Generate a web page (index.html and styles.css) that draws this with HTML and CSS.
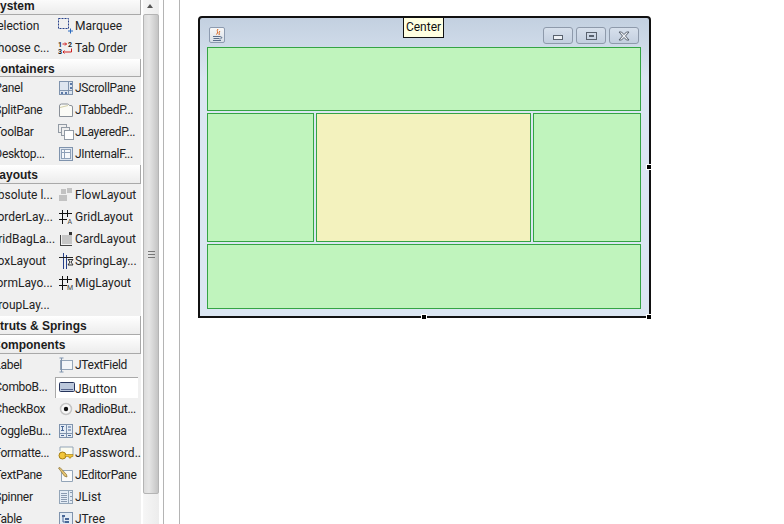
FILE: index.html
```html
<!DOCTYPE html>
<html lang="en">

<head>
    <meta charset="UTF-8">
    <title>Designer</title>
    <link rel="stylesheet" href="styles.css">
</head>

<body>
    <aside class="palette">
        <div class="palette-inner">
            <h3 class="group">System</h3>
            <div class="items">
                <div class="item">Selection</div>
                <div class="item">
                    <svg class="icon" viewBox="0 0 16 16"><rect x="0.500" y="0.500" width="10" height="10" fill="none" stroke="#26408a" stroke-dasharray="2 1"/><path d="M12.500 10.500v5M10 13h5" stroke="#2a6ac0"/></svg>
                    Marquee
                </div>
                <div class="item">Choose c...</div>
                <div class="item">
                    <svg class="icon" viewBox="0 0 16 16"><text x="0" y="6.500" class="icon-num">1</text><text x="10" y="6.500" class="icon-num">2</text><text x="0" y="13.500" class="icon-num">3</text><path d="M4.500 4h4M7 2.500L8.500 4 7 5.500M13.500 8.500v3.500H5M6.500 10.500L5 12l1.500 1.500" fill="none" stroke="#d02020"/></svg>
                    Tab Order
                </div>
            </div>
            <h3 class="group group-short">Containers</h3>
            <div class="items">
                <div class="item item-j">JPanel</div>
                <div class="item tight">
                    <svg class="icon" viewBox="0 0 16 16"><rect x="1.500" y="1.500" width="13" height="13" fill="#dde5ef" stroke="#7f93ad"/><path d="M10.500 2v12M2 10.500h12" stroke="#7f93ad"/><path d="M12 3h2v2h-2zM12 7h2v2h-2zM3 12h2v2H3zM7 12h2v2H7z" fill="#5a78a8"/></svg>
                    JScrollPane
                </div>
                <div class="item item-j">JSplitPane</div>
                <div class="item tight">
                    <svg class="icon" viewBox="0 0 16 16"><path d="M1.500 14.500V4q0-2 2-2h6q1 0 2 1.500h1.500q1.500 0 1.500 1.500v9.500z" fill="#fbfbf6" stroke="#8a9098"/><path d="M2 5.500q4-1 8-2" fill="none" stroke="#d4d0a8"/></svg>
                    JTabbedP...
                </div>
                <div class="item item-j">JToolBar</div>
                <div class="item tight">
                    <svg class="icon" viewBox="0 0 16 16"><rect x="0.500" y="0.500" width="8" height="8" fill="#eeeeee" stroke="#929aa4"/><rect x="3.500" y="3.500" width="8" height="8" fill="#eeeeee" stroke="#929aa4"/><rect x="6.500" y="6.500" width="9" height="9" fill="#ffffff" stroke="#929aa4"/></svg>
                    JLayeredP...
                </div>
                <div class="item item-j">JDesktop...</div>
                <div class="item tight">
                    <svg class="icon" viewBox="0 0 16 16"><rect x="1.500" y="1.500" width="13" height="13" fill="#dde5ef" stroke="#7f93ad"/><rect x="3.500" y="3.500" width="9" height="9" fill="#f6f8fb" stroke="#8ea0b8"/><path d="M6.500 4v8M4 6.500h8" stroke="#8ea0b8"/></svg>
                    JInternalF...
                </div>
            </div>
            <h3 class="group">Layouts</h3>
            <div class="items">
                <div class="item">Absolute l...</div>
                <div class="item">
                    <svg class="icon" viewBox="0 0 16 16"><path d="M3 7h5V2H3zM9 6h5V1H9zM1 14h8V8H1z" fill="#c2c2c2"/></svg>
                    FlowLayout
                </div>
                <div class="item">BorderLay...</div>
                <div class="item">
                    <svg class="icon" viewBox="0 0 16 16"><path d="M4.500 1v14M9.500 1v7M1 4.500h13M1 10.500h8" stroke="#111111" fill="none"/><text x="9.500" y="15" class="icon-mark">A</text></svg>
                    GridLayout
                </div>
                <div class="item">GridBagLa...</div>
                <div class="item">
                    <svg class="icon" viewBox="0 0 16 16"><path d="M2.500 4v10M2 14.500h12" stroke="#444444"/><path d="M4 4h10v9H4z" fill="#c6c6c6"/><path d="M11 1h3v3h-3z" fill="#333333"/></svg>
                    CardLayout
                </div>
                <div class="item">BoxLayout</div>
                <div class="item">
                    <svg class="icon" viewBox="0 0 16 16"><path d="M5.500 0v16M8.500 2v14" stroke="#26408a"/><path d="M1 4.500h14" stroke="#222222"/><path d="M10 6.500h5l-2 2.500 2 3h-5l2-3z" fill="none" stroke="#333333"/></svg>
                    SpringLay...
                </div>
                <div class="item">FormLayo...</div>
                <div class="item">
                    <svg class="icon" viewBox="0 0 16 16"><path d="M4.500 1v14M9.500 1v7M1 4.500h13M1 10.500h8" stroke="#111111" fill="none"/><text x="9" y="15" class="icon-mark">M</text></svg>
                    MigLayout
                </div>
                <div class="item">GroupLay...</div>
            </div>
            <h3 class="group">Struts &amp; Springs</h3>
            <h3 class="group">Components</h3>
            <div class="items">
                <div class="item item-j">JLabel</div>
                <div class="item tight">
                    <svg class="icon" viewBox="0 0 16 16"><rect x="2.500" y="3.500" width="12" height="9" fill="#f2f6f9" stroke="#93a5b8"/><path d="M3.500 1v14M1.500 1h4M1.500 15h4" stroke="#7f93ad" fill="none"/></svg>
                    JTextField
                </div>
                <div class="item item-j">JComboB...</div>
                <div class="item item-selected">
                    <svg class="icon" viewBox="0 0 16 16"><rect x="0.500" y="3.500" width="15" height="9" rx="1" fill="#bcc8dc" stroke="#26345c"/><path d="M2 10.500h12" stroke="#56648c"/></svg>
                    JButton
                </div>
                <div class="item item-j">JCheckBox</div>
                <div class="item tight">
                    <svg class="icon" viewBox="0 0 16 16"><circle cx="8" cy="8" r="5.500" fill="#f8f8f8" stroke="#c4c4c4" stroke-width="1.500"/><circle cx="8" cy="8" r="2.200" fill="#111111"/></svg>
                    JRadioBut...
                </div>
                <div class="item item-j">JToggleBu...</div>
                <div class="item tight">
                    <svg class="icon" viewBox="0 0 16 16"><rect x="1.500" y="1.500" width="13" height="13" fill="#e4ecf5" stroke="#7f93ad"/><path d="M8.500 2v12M2 10.500h12" stroke="#7f93ad"/><path d="M3 3.500h3M4.500 3.500v4M3 7.500h3M10 4h3M10 7h3M3 12.500h3M10 12.500h3" stroke="#4a6898" fill="none"/></svg>
                    JTextArea
                </div>
                <div class="item item-j">JFormatte...</div>
                <div class="item">
                    <svg class="icon" viewBox="0 0 16 16"><path d="M2 6V2h13v8h-5" fill="#fbfbf0" stroke="#93a5b8"/><circle cx="4.500" cy="10.500" r="3.500" fill="#f2c63a" stroke="#a88010"/><path d="M7 9.500h8v2h-2v1.500h-2v-1.500H7z" fill="#f2c63a" stroke="#a88010" stroke-width=".6"/></svg>
                    JPassword...
                </div>
                <div class="item item-j">JTextPane</div>
                <div class="item tight">
                    <svg class="icon" viewBox="0 0 16 16"><path d="M3.500 3.500h11v11h-11z" fill="#fafafa" stroke="#93a5b8"/><path d="M0.500 1l1.500-.5 6.500 7 .5 2.500-2.500-.8z" fill="#e4c472" stroke="#8a7030" stroke-width=".7"/></svg>
                    JEditorPane
                </div>
                <div class="item item-j">JSpinner</div>
                <div class="item">
                    <svg class="icon" viewBox="0 0 16 16"><rect x="1.500" y="1.500" width="13" height="13" fill="#e4ecf5" stroke="#93a5b8"/><path d="M10.500 2v12" stroke="#93a5b8"/><path d="M3 4.500h6M3 6.500h6M3 8.500h6M3 10.500h6M3 12.500h6M12 3.500h2M12 7.500h2M12 11.500h2" stroke="#8a9ab0"/></svg>
                    JList
                </div>
                <div class="item item-j">JTable</div>
                <div class="item">
                    <svg class="icon" viewBox="0 0 16 16"><rect x="1.500" y="1.500" width="13" height="13" fill="#e4ecf5" stroke="#7f93ad"/><path d="M4 4h3v2H4zM7 7h4v2H7zM7 10h4v2H7z" fill="#4a6898"/><path d="M5 6v5h2" stroke="#4a6898" fill="none"/></svg>
                    JTree
                </div>
            </div>
        </div>
    </aside>

    <div class="scrollbar">
        <div class="scroll-up"></div>
        <div class="scroll-thumb"><span class="grip"></span></div>
    </div>

    <div class="gutter"></div>

    <main class="canvas">
        <div class="frame">
            <div class="titlebar">
                <div class="java-icon">
                    <svg viewBox="0 0 14 14"><path d="M8 1C6 3 9 4 6.500 6.500M10 3C8 5 10 5 9 7" fill="none" stroke="#d8641c"/><path d="M3 8.500h7M3.500 10.500h6M3 12.500h8M10 8.500l2 1-2 2" fill="none" stroke="#5b6f8c"/></svg>
                </div>
                <div class="win-buttons">
                    <div class="win-btn"><span class="glyph-min"></span></div>
                    <div class="win-btn"><span class="glyph-max"></span></div>
                    <div class="win-btn">
                        <svg viewBox="0 0 12 10" class="glyph-close"><path d="M1 1h2.500L6 3.500 8.500 1H11L7.500 5 11 9H8.500L6 6.500 3.500 9H1l3.500-4z" fill="#eef1f5" stroke="#59626e"/></svg>
                    </div>
                </div>
            </div>
            <div class="border-grid">
                <div class="region north"></div>
                <div class="region"></div>
                <div class="region center"></div>
                <div class="region"></div>
                <div class="region south"></div>
            </div>
            <div class="tooltip">Center</div>
            <span class="handle handle-e"></span>
            <span class="handle handle-s"></span>
            <span class="handle handle-se"></span>
        </div>
    </main>
</body>

</html>
```

FILE: styles.css
```css
* {
    box-sizing: border-box;
}

body {
    margin: 0;
    width: 784px;
    height: 524px;
    overflow: hidden;
    display: flex;
    background-color: #ffffff;
    font-family: Roboto, "Liberation Sans", Arial, sans-serif;
    font-size: 12px;
    color: #222222;
}

/* palette, cut off on the left like the original */
.palette {
    width: 141px;
    flex: none;
    overflow: hidden;
    background-color: #f0f0f0;
}

.palette-inner {
    width: 171px;
    margin-left: -30px;
    margin-top: -4px;
}

.group {
    margin: 0;
    height: 19px;
    line-height: 20px;
    padding-left: 22px;
    font-family: "Liberation Sans", Arial, sans-serif;
    font-size: 12px;
    font-weight: bold;
    color: #1c1c1c;
    background: linear-gradient(#ffffff, #ececec);
    border-bottom: 1px solid #a9a9a9;
    border-right: 1px solid #a9a9a9;
}

.group-short {
    height: 18px;
}

.items {
    display: grid;
    grid-template-columns: 85px 83px;
}

.item {
    height: 22px;
    line-height: 23px;
    padding-left: 20px;
    position: relative;
    white-space: nowrap;
}

.tight {
    letter-spacing: -0.3px;
}

/* the J sits further out of view in the first column */
.item-j {
    padding-left: 18px;
    letter-spacing: -0.3px;
}

.item-selected {
    height: 21px;
    margin-top: 1px;
    padding-left: 19px;
    line-height: 23px;
    background-color: #ffffff;
    border-top: 1px solid #a9a9a9;
    border-left: 1px solid #a9a9a9;
}

.icon {
    position: absolute;
    left: 3px;
    top: 3px;
    width: 16px;
    height: 16px;
}

.item-selected .icon {
    top: 1px;
}

.icon-num {
    font-size: 7px;
    font-weight: bold;
    fill: #222222;
}

.icon-mark {
    font-size: 7px;
    fill: #444444;
}

.scrollbar {
    width: 16px;
    margin-left: 2px;
    flex: none;
    background: linear-gradient(90deg, #f6f6f6, #ececec);
}

.scroll-up {
    height: 14px;
    position: relative;
}

.scroll-up::after {
    content: "";
    position: absolute;
    left: 4px;
    top: 4px;
    border: 3.500px solid transparent;
    border-top: 0;
    border-bottom: 4px solid #555555;
}

.scroll-thumb {
    height: 480px;
    display: flex;
    align-items: center;
    justify-content: center;
    background: linear-gradient(90deg, #dcdcdc, #e6e6e6 35%, #c4c4c4);
    border: 1px solid #b4b4b4;
    border-radius: 2px;
}

.grip {
    width: 7px;
    height: 7px;
    border-top: 1px solid #777777;
    border-bottom: 1px solid #777777;
    background: linear-gradient(#777777, #777777) center / 100% 1px no-repeat;
}

.gutter {
    width: 17px;
    margin-left: 4px;
    flex: none;
    border-left: 1px solid #b4b4b4;
    border-right: 1px solid #b4b4b4;
}

.canvas {
    flex: 1;
    padding: 16px 0 0 18px;
}

.frame {
    position: relative;
    width: 453px;
    height: 302px;
    padding: 0 9px 8px 7px;
    border: 2px solid #111111;
    border-radius: 4px 4px 0 0;
    background: linear-gradient(#c3d0e0, #dbe6f2 60px);
}

.titlebar {
    height: 29px;
    display: flex;
    justify-content: space-between;
    align-items: flex-start;
    padding-top: 9px;
}

.java-icon {
    width: 16px;
    height: 16px;
    margin-left: 2px;
    background: linear-gradient(#f8f8f8, #d8dfe8);
    border: 1px solid #8d9bb0;
    border-radius: 2px;
}

.java-icon svg {
    display: block;
    width: 14px;
    height: 14px;
}

.win-buttons {
    display: flex;
    gap: 3px;
    margin-right: 1px;
}

.win-btn {
    width: 30px;
    height: 17px;
    display: flex;
    align-items: center;
    justify-content: center;
    background: linear-gradient(#d7e0ec, #c3cfdf);
    border: 1px solid #8e9aab;
    border-radius: 3px;
}

.glyph-min {
    width: 10px;
    height: 5px;
    margin-top: 3px;
    background-color: #eef1f5;
    border: 1px solid #59626e;
}

.glyph-max {
    width: 11px;
    height: 8px;
    border: 1px solid #59626e;
    background: linear-gradient(#59626e, #59626e) center / 5px 2px no-repeat;
}

.glyph-close {
    width: 12px;
    height: 10px;
}

.border-grid {
    display: grid;
    grid-template-columns: 107px 215px 108px;
    grid-template-rows: 64px 129px 65px;
    gap: 2px;
    width: 434px;
}

.region {
    background-color: #c0f4bd;
    border: 1px solid #34a444;
}

.north,
.south {
    grid-column: 1 / 4;
}

.center {
    background-color: #f3f2be;
}

.tooltip {
    position: absolute;
    left: 203px;
    top: -1px;
    width: 41px;
    height: 21px;
    line-height: 19px;
    text-align: center;
    background-color: #ffffe1;
    border: 1px solid #111111;
    color: #111111;
}

.handle {
    position: absolute;
    width: 6px;
    height: 6px;
    background-color: #000000;
    border: 1px solid #ffffff;
}

.handle-e {
    right: -3px;
    top: 146px;
}

.handle-s {
    left: 221px;
    bottom: -4px;
}

.handle-se {
    right: -3px;
    bottom: -4px;
}
```
